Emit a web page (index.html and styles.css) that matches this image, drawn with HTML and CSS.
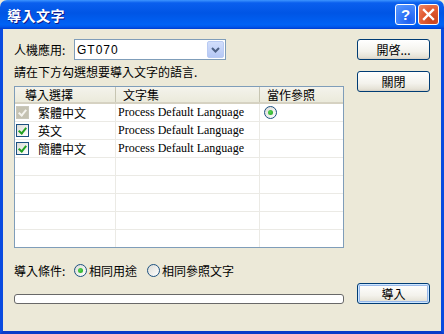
FILE: index.html
```html
<!DOCTYPE html>
<html lang="zh-Hant">
<head>
<meta charset="UTF-8">
<title>導入文字</title>
<link rel="stylesheet" href="styles.css">
</head>
<body>
<div class="window">
    <div class="titlebar">
        <span class="title">導入文字</span>
        <div class="title-buttons">
            <span class="tbtn help">?</span>
            <span class="tbtn close">
                <svg width="13" height="13" viewBox="0 0 13 13"><path d="M2 2 L11 11 M11 2 L2 11" stroke="#fff" stroke-width="2.4" stroke-linecap="square"/></svg>
            </span>
        </div>
    </div>
    <div class="content">
        <div class="main">
            <div class="field-row">
                <span class="label">人機應用:</span>
                <div class="combo">
                    <span class="combo-text">GT070</span>
                    <span class="drop">
                        <svg width="9" height="6" viewBox="0 0 9 6"><path d="M1 1 L4.5 4.5 L8 1" fill="none" stroke="#4d6185" stroke-width="2"/></svg>
                    </span>
                </div>
            </div>
            <p class="prompt">請在下方勾選想要導入文字的語言.</p>
            <div class="list">
                <div class="list-head">
                    <div class="hcell h1">導入選擇</div>
                    <div class="hcell h2">文字集</div>
                    <div class="hcell h3">當作參照</div>
                </div>
                <div class="row">
                    <div class="cell c1"><span class="check disabled"></span>繁體中文</div>
                    <div class="cell c2">Process Default Language</div>
                    <div class="cell c3"><span class="radio on"></span></div>
                </div>
                <div class="row">
                    <div class="cell c1"><span class="check"></span>英文</div>
                    <div class="cell c2">Process Default Language</div>
                    <div class="cell c3"></div>
                </div>
                <div class="row">
                    <div class="cell c1"><span class="check"></span>簡體中文</div>
                    <div class="cell c2">Process Default Language</div>
                    <div class="cell c3"></div>
                </div>
                <div class="row"><div class="cell c1"></div><div class="cell c2"></div><div class="cell c3"></div></div>
                <div class="row"><div class="cell c1"></div><div class="cell c2"></div><div class="cell c3"></div></div>
                <div class="row"><div class="cell c1"></div><div class="cell c2"></div><div class="cell c3"></div></div>
                <div class="row"><div class="cell c1"></div><div class="cell c2"></div><div class="cell c3"></div></div>
                <div class="row"><div class="cell c1"></div><div class="cell c2"></div><div class="cell c3"></div></div>
            </div>
            <div class="radio-row">
                <span class="label">導入條件:</span>
                <span class="option"><span class="radio on"></span>相同用途</span>
                <span class="option"><span class="radio"></span>相同參照文字</span>
            </div>
            <div class="progress"></div>
        </div>
        <div class="side">
            <button class="btn">開啓...</button>
            <button class="btn">關閉</button>
            <button class="btn import">導入</button>
        </div>
    </div>
</div>
</body>
</html>
```

FILE: styles.css
```css
body {
    margin: 0;
    padding: 0;
    font-family: "Noto Sans CJK TC", "Liberation Sans", sans-serif;
    font-size: 12px;
    color: #000;
    background: #fff;
}
.window {
    width: 444px;
    height: 334px;
    display: flex;
    flex-direction: column;
    background: #ece9d8;
    box-sizing: border-box;
}
.titlebar {
    height: 29px;
    flex: none;
    display: flex;
    align-items: center;
    justify-content: space-between;
    padding: 0 5px 0 7px;
    border-radius: 7px 7px 0 0;
    background: linear-gradient(to bottom, #3d95ff 0%, #0a5fee 10%, #0055e5 45%, #0062f5 85%, #0056ea 93%, #003cd0 100%);
}
.title {
    color: #fff;
    font-weight: bold;
    font-size: 14px;
    text-shadow: 1px 1px #0f1a89;
    letter-spacing: 0.5px;
}
.title-buttons {
    display: flex;
    gap: 2px;
}
.tbtn {
    width: 19px;
    height: 19px;
    border: 1px solid #fff;
    border-radius: 3px;
    display: flex;
    align-items: center;
    justify-content: center;
    color: #fff;
    font-family: "Liberation Sans", sans-serif;
    font-weight: bold;
    font-size: 15px;
}
.help {
    background: radial-gradient(circle at 70% 80%, #1d5ff0 0%, #3a7dfa 50%, #5d9cff 100%);
}
.close {
    background: radial-gradient(circle at 75% 80%, #c9431c 0%, #e35d34 55%, #ef8a69 100%);
}
.content {
    flex: 1;
    display: flex;
    gap: 13px;
    align-items: stretch;
    padding: 10px 0 0 11px;
    border-left: 3px solid #0a4be0;
    border-right: 3px solid #0a4be0;
    border-bottom: 3px solid #0a3bc8;
    box-sizing: border-box;
}
.main {
    width: 330px;
    display: flex;
    flex-direction: column;
    align-self: flex-start;
}
.field-row {
    height: 21px;
    display: flex;
    align-items: center;
}
.label {
    width: 60px;
}
.combo {
    width: 150px;
    height: 19px;
    border: 1px solid #7f9db9;
    background: #fff;
    display: flex;
    align-items: center;
    justify-content: space-between;
}
.combo-text {
    padding-left: 2px;
    font-family: "Liberation Sans", sans-serif;
    letter-spacing: 1px;
}
.drop {
    width: 15px;
    height: 15px;
    margin-right: 1px;
    border: 1px solid #b9cbf3;
    border-radius: 2px;
    background: linear-gradient(to bottom, #d2defb, #b5c8f5);
    display: flex;
    align-items: center;
    justify-content: center;
}
.prompt {
    margin: 5px 0 0;
    line-height: 14px;
}
.list {
    margin-top: 7px;
    height: 162px;
    border: 1px solid #7f9db9;
    background: #fff;
    box-sizing: border-box;
    overflow: hidden;
}
.list-head, .row {
    display: grid;
    grid-template-columns: 101px 144px 1fr;
}
.list-head {
    height: 17px;
    background: linear-gradient(to bottom, #f4f3ec, #ebeadb);
    border-bottom: 2px solid #d6d2c2;
    box-sizing: border-box;
}
.hcell {
    line-height: 15px;
    border-right: 1px solid #c7c5b2;
}
.h1 { padding-left: 10px; }
.h2 { padding-left: 7px; }
.h3 { padding-left: 7px; border-right: none; }
.row {
    height: 18px;
}
.cell {
    display: flex;
    align-items: center;
    border-right: 1px solid #ebeae5;
    border-bottom: 1px solid #ebeae5;
}
.c1 { padding-left: 1px; }
.c2 {
    padding-left: 2px;
    font-family: "Liberation Serif", serif;
    font-size: 12px;
}
.c3 { padding-left: 4px; border-right: none; }
.check {
    width: 11px;
    height: 11px;
    margin-right: 9px;
    border: 1px solid #1c5180;
    background: linear-gradient(135deg, #dcdcd6, #fff);
    position: relative;
}
.check::after {
    content: "";
    position: absolute;
    left: 3px;
    top: 1px;
    width: 3px;
    height: 6px;
    border: solid #21a121;
    border-width: 0 2px 2px 0;
    transform: rotate(40deg);
}
.check.disabled {
    border-color: #cac8bb;
    background: #c5c2b2;
}
.check.disabled::after {
    border-color: #f4f3ee;
}
.radio {
    width: 11px;
    height: 11px;
    border: 1px solid #1c5180;
    border-radius: 50%;
    background: linear-gradient(135deg, #dcdcd6, #fff);
    position: relative;
    flex: none;
}
.radio.on::after {
    content: "";
    position: absolute;
    left: 3px;
    top: 3px;
    width: 5px;
    height: 5px;
    border-radius: 50%;
    background: radial-gradient(circle at 40% 40%, #55d651, #21a121);
}
.radio-row {
    margin-top: 14px;
    height: 16px;
    display: flex;
    align-items: center;
}
.option {
    display: flex;
    align-items: center;
    gap: 2px;
    margin-right: 10px;
}
.progress {
    margin-top: 16px;
    height: 10px;
    border: 1px solid #686868;
    border-radius: 3px;
    background: #fff;
    box-sizing: border-box;
}
.side {
    width: 73px;
    display: flex;
    flex-direction: column;
    padding-bottom: 27px;
}
.btn {
    height: 21px;
    margin: 0 0 11px;
    padding: 0;
    font-family: "Noto Sans CJK TC", sans-serif;
    font-size: 12px;
    color: #000;
    border: 1px solid #003c74;
    border-radius: 3px;
    background: linear-gradient(to bottom, #fff 0%, #f3f2ec 60%, #e5e2d6 90%, #d6d0c5 100%);
}
.btn.import {
    margin-top: auto;
    margin-bottom: 0;
    box-shadow: inset 0 0 0 1px #cee7ff, inset 0 0 0 2px #98b8ea;
}
```
